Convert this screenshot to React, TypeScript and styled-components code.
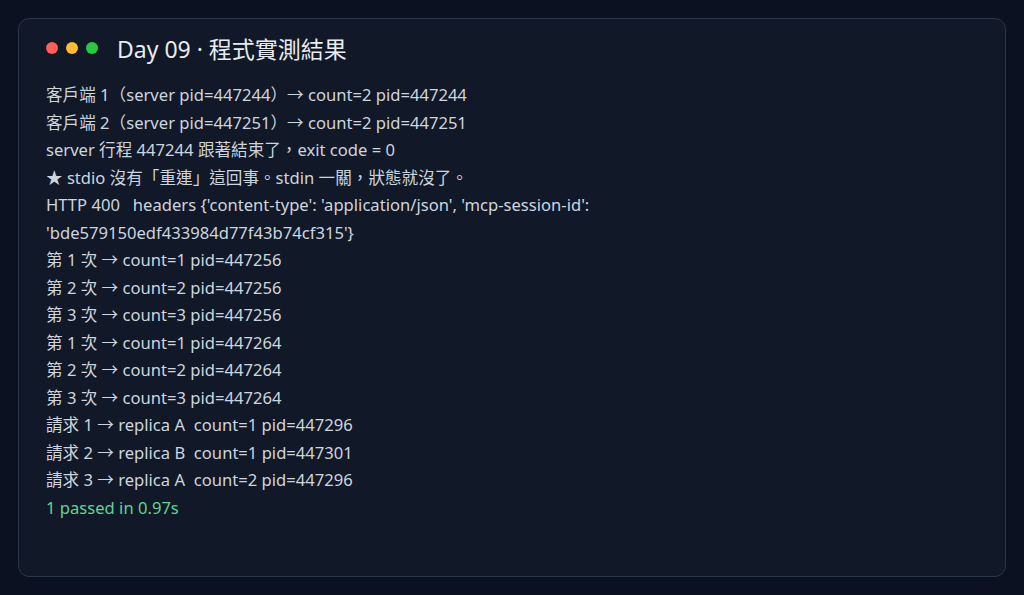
import React from "react";
import styled, { createGlobalStyle } from "styled-components";

const Global = createGlobalStyle`
  html, body { margin: 0; padding: 0; background: #0b1120; }
  body {
    font-family: "Noto Sans", "Noto Sans CJK TC", sans-serif;
    -webkit-font-smoothing: antialiased;
  }
  #root { padding: 18px; box-sizing: border-box; height: 595px; }
`;

const Card = styled.section`
  box-sizing: border-box;
  height: 559px;
  background: #111827;
  border: 1px solid #2b3648;
  border-radius: 11px;
  padding: 14px 27px;
  display: flex;
  flex-direction: column;
  gap: 18px;
`;

const Header = styled.header`
  display: flex;
  align-items: center;
  height: 30px;
  gap: 19px;
`;

const Dots = styled.div`
  display: flex;
  gap: 8px;
`;

const Dot = styled.span<{ $color: string }>`
  width: 12px;
  height: 12px;
  border-radius: 50%;
  background: ${(p) => p.$color};
`;

const Title = styled.h1`
  margin: 0;
  font-size: 23px;
  font-weight: 400;
  color: #e8ecf1;
`;

const Output = styled.div`
  display: flex;
  flex-direction: column;
  max-width: 640px;
`;

const Line = styled.div<{ $ok?: boolean }>`
  font-size: 16.6px;
  line-height: 27.5px;
  white-space: pre-wrap;
  color: ${(p) => (p.$ok ? "#62d394" : "#cdd5df")};
`;

const lines = [
  "客戶端 1（server pid=447244）→ count=2 pid=447244",
  "客戶端 2（server pid=447251）→ count=2 pid=447251",
  "server 行程 447244 跟著結束了，exit code = 0",
  "★ stdio 沒有「重連」這回事。stdin 一關，狀態就沒了。",
  "HTTP 400   headers {'content-type': 'application/json', 'mcp-session-id': 'bde579150edf433984d77f43b74cf315'}",
  "第 1 次 → count=1 pid=447256",
  "第 2 次 → count=2 pid=447256",
  "第 3 次 → count=3 pid=447256",
  "第 1 次 → count=1 pid=447264",
  "第 2 次 → count=2 pid=447264",
  "第 3 次 → count=3 pid=447264",
  "請求 1 → replica A  count=1 pid=447296",
  "請求 2 → replica B  count=1 pid=447301",
  "請求 3 → replica A  count=2 pid=447296",
];

export default function App() {
  return (
    <>
      <Global />
      <Card lang="zh-Hant-TW">
        <Header>
          <Dots>
            <Dot $color="#ff5f57" />
            <Dot $color="#febc2e" />
            <Dot $color="#28c840" />
          </Dots>
          <Title>Day 09 · 程式實測結果</Title>
        </Header>
        <Output>
          {lines.map((l, i) => (
            <Line key={i}>{l}</Line>
          ))}
          <Line $ok>1 passed in 0.97s</Line>
        </Output>
      </Card>
    </>
  );
}
